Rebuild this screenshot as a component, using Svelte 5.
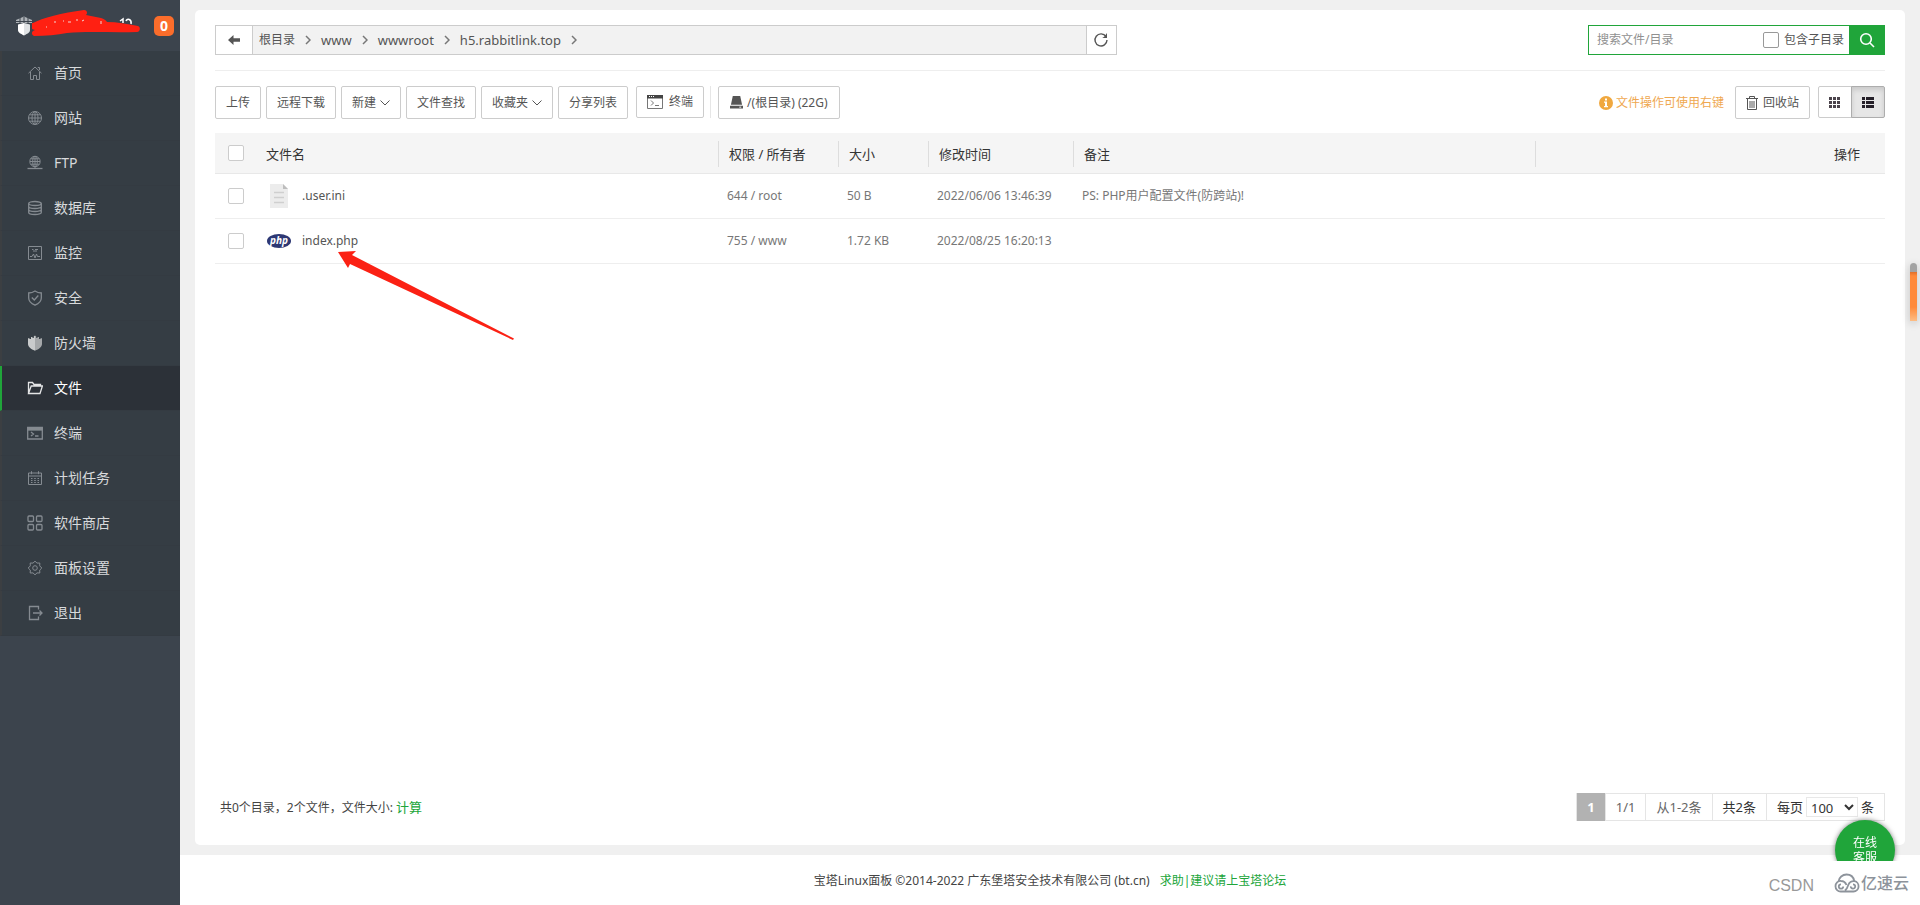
<script lang="ts">
	type NavItem = { label: string; icon: string };
	type FileRow = {
		name: string;
		kind: 'text' | 'php';
		owner: string;
		size: string;
		mtime: string;
		note: string;
	};

	const nav: NavItem[] = [
		{ label: '首页', icon: 'home' },
		{ label: '网站', icon: 'globe' },
		{ label: 'FTP', icon: 'ftp' },
		{ label: '数据库', icon: 'database' },
		{ label: '监控', icon: 'monitor' },
		{ label: '安全', icon: 'shield' },
		{ label: '防火墙', icon: 'firewall' },
		{ label: '文件', icon: 'folder' },
		{ label: '终端', icon: 'terminal' },
		{ label: '计划任务', icon: 'calendar' },
		{ label: '软件商店', icon: 'apps' },
		{ label: '面板设置', icon: 'gear' },
		{ label: '退出', icon: 'logout' }
	];

	const crumbs = ['根目录', 'www', 'wwwroot', 'h5.rabbitlink.top'];

	const files: FileRow[] = [
		{
			name: '.user.ini',
			kind: 'text',
			owner: '644 / root',
			size: '50 B',
			mtime: '2022/06/06 13:46:39',
			note: 'PS: PHP用户配置文件(防跨站)!'
		},
		{
			name: 'index.php',
			kind: 'php',
			owner: '755 / www',
			size: '1.72 KB',
			mtime: '2022/08/25 16:20:13',
			note: ''
		}
	];

	let active = $state('文件');
	let keyword = $state('');
	let recursive = $state(false);
	let view = $state('list');
	let pageSize = $state('100');
	let selected = $state<string[]>([]);

	const allSelected = $derived(selected.length === files.length);

	function toggleAll() {
		selected = allSelected ? [] : files.map((file) => file.name);
	}
</script>

{#snippet navIcon(name: string)}
	<svg class="nav-icon" viewBox="0 0 16 16" width="16" height="16" aria-hidden="true">
		{#if name === 'home'}
			<path d="M1.5 8.2 8 2l6.500 6.200M3.500 7v7.500h3v-4h3v4h3V7M10.800 2.500h1.700v2.500" />
		{:else if name === 'globe'}
			<circle cx="8" cy="8" r="6.500" />
			<ellipse cx="8" cy="8" rx="3" ry="6.500" />
			<path d="M1.500 8h13M2.500 4.800h11M2.500 11.200h11M8 1.500v13" />
		{:else if name === 'ftp'}
			<circle cx="8" cy="6.500" r="5.200" />
			<ellipse cx="8" cy="6.500" rx="2.300" ry="5.200" />
			<path d="M3 6.500h10M3.800 3.800h8.400M3.800 9.200h8.400M8 1.300v12" />
			<path class="thick" d="M.5 13.500h15" />
		{:else if name === 'database'}
			<g class="thick">
				<ellipse cx="8" cy="3.500" rx="6.300" ry="2" />
				<path d="M1.700 3.500v9c0 1.200 2.800 2 6.300 2s6.300-.8 6.300-2v-9M1.700 6.500c0 1.200 2.800 2 6.300 2s6.300-.8 6.300-2M1.700 9.500c0 1.200 2.800 2 6.300 2s6.300-.8 6.300-2" />
			</g>
		{:else if name === 'monitor'}
			<path d="M1.500 1.500h13v13h-13zM3 11.500h2L6.500 9 8 13l1.500-4 1 2.500H13M5 4.500h1.500M8 4.500h3M6 6h4" />
		{:else if name === 'shield'}
			<path class="thick" d="M8 1c2 1.400 4 2 6.300 2v5c0 3.500-2.300 5.500-6.300 7.200C4 13.500 1.700 11.500 1.700 8V3C4 3 6 2.400 8 1z" />
			<path class="thick" d="M4.800 7.500 7.300 10l4-4.500" />
		{:else if name === 'firewall'}
			<path class="fill-light" d="M8 .5 6.800 1.400V3H5.500V2H4v2H2.500V3.200H1V9c0 3 3 5 7 6.800z" />
			<path class="fill-dim" d="m8 .5 1.200.9V3h1.300V2H12v2h1.500v-.8H15V9c0 3-3 5-7 6.800z" />
		{:else if name === 'folder'}
			<path class="thick" d="M1.500 13.500v-11h4l1.500 2h6.500V6M1.500 13.500 4.200 6h11.200l-2.400 7.500z" />
		{:else if name === 'terminal'}
			<path class="thick" d="M.7 2.500h14.600v11.500H.7zM4 7l2.500 2L4 11M8 11h3.500" />
			<path class="fill" d="M.7 2.500h14.600v2.600H.7z" />
		{:else if name === 'calendar'}
			<path d="M1.500 3h13v11.500h-13zM1.500 6h13M4.500 1.200v3M11.500 1.200v3M4 8.500h1.500M7.200 8.500h1.600M10.500 8.500H12M4 10.500h1.500M7.200 10.500h1.600M10.500 10.500H12M4 12.500h1.500M7.200 12.500h1.600M10.500 12.500H12" />
		{:else if name === 'apps'}
			<g class="thick">
				<rect x="1" y="1" width="5.500" height="5.500" rx="1" />
				<rect x="9.500" y="1" width="5.500" height="5.500" rx="1" />
				<rect x="1" y="9.500" width="5.500" height="5.500" rx="1" />
				<rect x="9.500" y="9.500" width="5.500" height="5.500" rx="1" />
			</g>
		{:else if name === 'gear'}
			<path d="m8 1.200 2 1.900 2.800-.1-.1 2.900L14.800 8l-2.100 2.100.1 2.900-2.800-.1-2 1.900-2-1.900-2.800.1.100-2.900L1.200 8l2.100-2.100L3.200 3l2.800.1z" />
			<circle cx="8" cy="8" r="2.300" />
		{:else}
			<path class="thick" d="M11.500 4.500v-3h-9v13h9v-3M6 8h9M12.500 5.500 15 8l-2.500 2.500" />
		{/if}
	</svg>
{/snippet}

<div class="app">
	<aside class="sidebar">
		<header class="brand">
			<svg class="brand-mark" viewBox="0 0 20 20" width="20" height="20" aria-hidden="true">
				<path fill="#aeb3b8" d="M2 4 10 .5 18 4v3H2z" />
				<path stroke="#3c444d" fill="none" d="M1 5.500h18M6 2v5M10 1v6M14 2v5" />
				<path fill="#fff" d="M10 7 4 8.500V14c0 2.500 3 4 6 5.500z" />
				<path fill="#dfe2e4" d="m10 7 6 1.500V14c0 2.500-3 4-6 5.500z" />
			</svg>
			<svg class="scribble" viewBox="0 0 110 28" width="110" height="28" aria-hidden="true">
				<path fill="#ff2012" d="M1 14C10 9 30 4 52 1c3 0 4 3 2 5l15 3c3 1 5 2 6 4 10 0 20 2 31 4 3 1 2 6-1 6-24 1-48-1-70 1-10 2-21 3-33 3-3-1-3-5 1-6-4 0-5-4-3-7z" />
				<path stroke="#f3d8d6" fill="none" d="M22 13h2M31 12h1M36 13h3M44 11h2M50 12l2-1M69 12v3M14 18h1" />
				<path stroke="#fff" stroke-width="1.500" fill="none" d="M88 12l3-2v4M94 12c1-3 6-2 5 3" />
			</svg>
			<span class="badge">0</span>
		</header>
		<nav>
			{#each nav as item (item.label)}
				<a
					href="#{item.icon}"
					class="nav-link"
					class:is-active={active === item.label}
					onclick={() => (active = item.label)}
				>
					{@render navIcon(item.icon)}
					{item.label}
				</a>
			{/each}
		</nav>
	</aside>

	<div class="main">
		<main class="card">
			<div class="path-row">
				<div class="path">
					<button type="button" class="path-back" aria-label="返回上级">
						<svg viewBox="0 0 14 12" width="14" height="12" aria-hidden="true">
							<path fill="#555" d="M1 6 6.500 1v3.300H13v3.400H6.500V11z" />
						</svg>
					</button>
					<div class="crumbs">
						{#each crumbs as crumb (crumb)}
							<a href="#path">{crumb}</a>
							<svg class="crumb-sep" viewBox="0 0 6 10" width="6" height="10" aria-hidden="true">
								<path d="m1 1 4 4-4 4" />
							</svg>
						{/each}
					</div>
					<button type="button" class="path-refresh" aria-label="刷新">
						<svg viewBox="0 0 16 16" width="16" height="16" aria-hidden="true">
							<path fill="none" stroke="#555" stroke-width="1.400" d="M13 4.600A6 6 0 1 0 14 8" />
							<path fill="#555" d="M14 1v5H9.200l2-1.300z" />
						</svg>
					</button>
				</div>

				<div class="search">
					<input
						class="search-input"
						type="text"
						placeholder="搜索文件/目录"
						aria-label="搜索文件/目录"
						bind:value={keyword}
					/>
					<label class="search-option">
						<input type="checkbox" class="check" bind:checked={recursive} />
						包含子目录
					</label>
					<button type="button" class="search-button" aria-label="搜索">
						<svg viewBox="0 0 16 16" width="16" height="16" aria-hidden="true">
							<circle cx="7" cy="7" r="5.300" />
							<path d="m11 11 4 4" />
						</svg>
					</button>
				</div>
			</div>

			<div class="toolbar">
				<div class="tools">
					<button type="button" class="btn">上传</button>
					<button type="button" class="btn">远程下载</button>
					<button type="button" class="btn">
						新建
						<svg class="caret" viewBox="0 0 10 6" width="10" height="6" aria-hidden="true"><path d="m.5.5 4.500 4.500L9.500.5" /></svg>
					</button>
					<button type="button" class="btn">文件查找</button>
					<button type="button" class="btn">
						收藏夹
						<svg class="caret" viewBox="0 0 10 6" width="10" height="6" aria-hidden="true"><path d="m.5.5 4.500 4.500L9.500.5" /></svg>
					</button>
					<button type="button" class="btn">分享列表</button>
				</div>
				<div class="terminal">
					<button type="button" class="btn btn-icon">
						<svg viewBox="0 0 16 14" width="16" height="14" aria-hidden="true">
							<path fill="none" stroke="#777" d="M.5.500h15v13H.5zM4 5.500 6.500 8 4 10.500M8 10.500h4" />
							<path fill="#444" d="M0 0h16v3.500H0z" />
							<path fill="#fff" d="M2 1h1v1H2zM4 1h1v1H4zM6 1h1v1H6z" />
						</svg>
						终端
					</button>
				</div>
				<button type="button" class="btn btn-disk">
					<svg viewBox="0 0 14 14" width="13" height="13" aria-hidden="true">
						<path fill="#555" d="M3 0h8l2 9.500H1zM0 10.500h14V13.500H0z" />
						<path fill="#fff" d="M10 11.500h2v1h-2z" />
					</svg>
					/(根目录) (22G)
				</button>

				<p class="tip">
					<svg viewBox="0 0 14 14" width="14" height="14" aria-hidden="true">
						<circle cx="7" cy="7" r="7" fill="#f0a83f" />
						<path fill="#fff" d="M6 2.500h2v2H6zM5 5.500h3v4.500h1v1.200H5V10h1V6.700H5z" />
					</svg>
					文件操作可使用右键
				</p>
				<button type="button" class="btn btn-trash">
					<svg viewBox="0 0 12 14" width="12" height="14" aria-hidden="true">
						<path fill="none" stroke="#555" d="M0 2.500h12M3.500 2.500v-2h5v2M1.500 3v10.500h9V3M4 5v7M6 5v7M8 5v7" />
					</svg>
					回收站
				</button>
				<div class="views">
					<button type="button" class="view" class:is-on={view === 'grid'} aria-label="图标视图" onclick={() => (view = 'grid')}>
						<svg viewBox="0 0 12 11" width="12" height="11" aria-hidden="true">
							<path fill="#4b444c" d="M0 0h3v3H0zM4 0h3v3H4zM8 0h3v3H8zM0 4h3v3H0zM4 4h3v3H4zM8 4h3v3H8zM0 8h3v3H0zM4 8h3v3H4zM8 8h3v3H8z" />
						</svg>
					</button>
					<button type="button" class="view" class:is-on={view === 'list'} aria-label="列表视图" onclick={() => (view = 'list')}>
						<svg viewBox="0 0 12 11" width="12" height="11" aria-hidden="true">
							<path fill="#252029" d="M0 0h3v3H0zM4 0h8v3H4zM0 4h3v3H0zM4 4h8v3H4zM0 8h3v3H0zM4 8h8v3H4z" />
						</svg>
					</button>
				</div>
			</div>

			<table class="files">
				<colgroup>
					<col class="col-check" />
					<col class="col-name" />
					<col class="col-owner" />
					<col class="col-size" />
					<col class="col-time" />
					<col class="col-note" />
					<col />
				</colgroup>
				<thead>
					<tr>
						<th><input type="checkbox" class="check" aria-label="全选" checked={allSelected} onchange={toggleAll} /></th>
						<th><span class="head">文件名</span></th>
						<th><span class="head">权限 / 所有者</span></th>
						<th><span class="head">大小</span></th>
						<th><span class="head">修改时间</span></th>
						<th><span class="head">备注</span></th>
						<th><span class="head head-last">操作</span></th>
					</tr>
				</thead>
				<tbody>
					{#each files as file (file.name)}
						<tr>
							<td><input type="checkbox" class="check" aria-label={file.name} value={file.name} bind:group={selected} /></td>
							<td>
								<a href="#file" class="file-name">
									{#if file.kind === 'php'}
										<svg viewBox="0 0 24 24" width="24" height="24" aria-hidden="true">
											<ellipse cx="12" cy="12" rx="12" ry="7" fill="#2d3874" />
											<text x="12" y="15" class="php-text">php</text>
										</svg>
									{:else}
										<svg viewBox="0 0 24 24" width="24" height="24" aria-hidden="true">
											<path fill="#ececec" d="M3 0h13l5 5v19H3z" />
											<path fill="#bdbdbd" d="M16 0v5h5z" />
											<path stroke="#cfcfcf" stroke-width="1.500" d="M7 8.500h10M7 13.500h10M7 18.500h10" />
										</svg>
									{/if}
									{file.name}
								</a>
							</td>
							<td>{file.owner}</td>
							<td>{file.size}</td>
							<td>{file.mtime}</td>
							<td>{file.note}</td>
							<td></td>
						</tr>
					{/each}
				</tbody>
			</table>

			<div class="summary">
				<p class="totals">共0个目录，2个文件，文件大小: <a href="#size">计算</a></p>
				<div class="pager">
					<span class="page-current">1</span>
					<span class="page-soft">1/1</span>
					<span class="page-soft">从1-2条</span>
					<span>共2条</span>
					<label>
						每页
						<select bind:value={pageSize}>
							<option>100</option>
							<option>200</option>
							<option>500</option>
						</select>
						条
					</label>
				</div>
			</div>
		</main>

		<footer class="footer">
			宝塔Linux面板 ©2014-2022 广东堡塔安全技术有限公司 (bt.cn)
			<a href="#forum">求助|建议请上宝塔论坛</a>
		</footer>
	</div>

	<svg class="arrow" viewBox="0 0 178 92" width="178" height="92" aria-hidden="true">
		<path fill="#fb2114" d="m0 2 18-1-4 4 162 83.500-1 1.500L12 14l-2 4z" />
	</svg>

	<div class="side-handle" aria-hidden="true"></div>
	<button type="button" class="support">在线<br />客服</button>
	<div class="watermark">
		<span class="wm-csdn">CSDN</span>
		<svg viewBox="0 0 26 20" width="26" height="20" aria-hidden="true">
			<path d="M4.500 8.500C5 4.500 8.500 1.500 12.500 1.500c4 0 7 2.500 7.700 6.500" />
			<path d="M9.200 13.500a2.200 2.200 0 1 1-2.200-2.200M12.500 12c-1-2.500-3-4-5.500-4a5 5 0 0 0-5.500 5.200A5.200 5.200 0 0 0 7 18.500h12.500a5.200 5.200 0 1 0-5-7c-.8 2.500-1.500 4.500-3.500 6M16.800 13.300a2.200 2.200 0 1 0 2.200-2" />
		</svg>
		<span class="wm-yisu">亿速云</span>
	</div>
</div>

<style>
	:global(body) {
		background: #f0f0f0;
	}

	.app {
		position: relative;
		display: flex;
		min-height: 100vh;
		font-family: 'Noto Sans', 'Noto Sans CJK SC', sans-serif;
		font-size: 12px;
		line-height: 18px;
		color: #555;
	}

	.app *,
	.app *::before {
		box-sizing: border-box;
	}

	a {
		color: inherit;
		text-decoration: none;
	}

	button,
	input,
	select {
		font: inherit;
		color: inherit;
		margin: 0;
	}

	button {
		display: inline-flex;
		align-items: center;
		justify-content: center;
		padding: 0;
		border: 0;
		cursor: pointer;
	}

	svg {
		display: block;
		flex-shrink: 0;
	}

	/* Sidebar */
	.sidebar {
		flex: 0 0 180px;
		background: #3c444d;
	}

	.brand {
		display: flex;
		align-items: center;
		height: 51px;
		padding: 0 6px 0 14px;
	}

	.scribble {
		margin: -6px 0 0 -2px;
	}

	.badge {
		width: 20px;
		margin-left: auto;
		border-radius: 5px;
		background: #fb6d2b;
		color: #fff;
		font-size: 14px;
		font-weight: 700;
		line-height: 20px;
		text-align: center;
	}

	.nav-link {
		display: flex;
		align-items: center;
		gap: 11px;
		height: 45px;
		padding-left: 25px;
		border-left: 2px solid #3c3f42;
		border-bottom: 1px solid #343b42;
		background: #353d44;
		color: #d8dadc;
		font-size: 14px;
	}

	.nav-link.is-active {
		border-left-color: #20a53a;
		background: #2c3138;
		color: #fff;
	}

	.nav-icon {
		fill: none;
		stroke: #858b91;
		stroke-width: 1;
	}

	.is-active .nav-icon {
		stroke: #e4e5e6;
	}

	.nav-icon .thick {
		stroke-width: 1.3;
	}

	.nav-icon .fill {
		fill: #858b91;
	}

	.nav-icon .fill-light {
		fill: #c9cbcc;
		stroke: none;
	}

	.nav-icon .fill-dim {
		fill: #a5a8aa;
		stroke: none;
	}

	/* Content */
	.main {
		display: flex;
		flex: 1;
		flex-direction: column;
		min-width: 0;
	}

	.card {
		display: flex;
		flex: 1;
		flex-direction: column;
		margin: 10px 15px;
		padding: 15px 20px 24px;
		border-radius: 5px;
		background: #fff;
	}

	.path-row {
		display: flex;
		justify-content: space-between;
		padding-bottom: 15px;
		border-bottom: 1px solid #eee;
	}

	.path {
		display: flex;
		width: 54%;
		height: 30px;
		border: 1px solid #ccc;
	}

	.path-back {
		width: 37px;
		border-right: 1px solid #ccc;
		background: #fff;
	}

	.path-refresh {
		width: 30px;
		border-left: 1px solid #ccc;
		background: #fff;
	}

	.crumbs {
		display: flex;
		flex: 1;
		align-items: center;
		gap: 10px;
		padding-left: 6px;
		background: #f2f2f2;
		font-size: 13px;
	}

	.crumb-sep {
		fill: none;
		stroke: #777;
		stroke-width: 1.5;
	}

	.crumbs a:first-child {
		font-size: 12px;
	}

	.search {
		display: flex;
		width: 297px;
		height: 30px;
		border: 1px solid #20a53a;
	}

	.search-input {
		flex: 1;
		min-width: 0;
		padding: 0 8px;
		border: 0;
		outline: none;
		background: #fff;
	}

	.search-input::placeholder {
		color: #909090;
	}

	.search-option {
		display: flex;
		align-items: center;
		gap: 5px;
		padding-right: 5px;
	}

	.search-button {
		width: 35px;
		background: #20a53a;
	}

	.search-button svg {
		fill: none;
		stroke: #fff;
		stroke-width: 1.6;
	}

	.check {
		display: block;
		width: 16px;
		height: 16px;
		border: 1px solid #ccc;
		border-radius: 2px;
		background: #fff;
		appearance: none;
	}

	.check:checked {
		border-color: #20a53a;
		background: #20a53a;
	}

	.search-option .check {
		border-color: #999;
	}

	/* Toolbar */
	.toolbar {
		display: flex;
		align-items: flex-start;
		padding: 15px 0 14px;
	}

	.tools {
		display: flex;
		gap: 5px;
	}

	.btn {
		gap: 4px;
		height: 33px;
		padding: 0 10px;
		border: 1px solid #ccc;
		border-radius: 2px;
		background: #fff;
		white-space: nowrap;
	}

	.caret {
		fill: none;
		stroke: #555;
	}

	.terminal {
		margin-left: 8px;
		padding-right: 6px;
		border-right: 1px solid #e6e6e6;
	}

	.btn-icon {
		gap: 6px;
		height: 32px;
	}

	.btn-disk {
		margin-left: 7px;
		padding: 0 11px;
	}

	.tip {
		display: flex;
		align-items: center;
		gap: 3px;
		height: 33px;
		margin: 0 11px 0 auto;
		color: #efa850;
	}

	.btn-trash {
		gap: 5px;
	}

	.views {
		display: flex;
		height: 32px;
		margin-left: 8px;
	}

	.view {
		width: 34px;
		border: 1px solid #ccc;
		border-radius: 2px 0 0 2px;
		background: #fff;
	}

	.view + .view {
		margin-left: -1px;
		border-radius: 0 2px 2px 0;
	}

	.view.is-on {
		border-color: #adadad;
		background: #e6e6e6;
		box-shadow: inset 0 3px 5px rgba(0, 0, 0, 0.125);
	}

	/* File table */
	.files {
		width: 100%;
		border-collapse: separate;
		border-spacing: 0;
		table-layout: fixed;
	}

	.col-check {
		width: 41px;
	}

	.col-name {
		width: 463px;
	}

	.col-owner {
		width: 120px;
	}

	.col-size {
		width: 90px;
	}

	.col-time {
		width: 145px;
	}

	.col-note {
		width: 462px;
	}

	th {
		height: 41px;
		padding: 2px 0 0;
		border-bottom: 1px solid #e8e8e8;
		background: #f5f5f5;
		color: #333;
		font-size: 13px;
		font-weight: 400;
		text-align: left;
	}

	.head {
		display: block;
		padding-left: 10px;
		border-right: 1px solid #ddd;
		line-height: 26px;
	}

	.head-last {
		padding-right: 25px;
		border-right: 0;
		text-align: right;
	}

	td {
		height: 45px;
		padding: 0 8px;
		border-bottom: 1px solid #eee;
		color: #777;
	}

	th:first-child,
	td:first-child {
		padding: 0 0 0 13px;
	}

	.file-name {
		display: flex;
		align-items: center;
		gap: 11px;
		padding-left: 3px;
		color: #555;
	}

	.php-text {
		fill: #fff;
		font-size: 10px;
		font-style: italic;
		font-weight: 700;
		text-anchor: middle;
	}

	/* Totals and paging */
	.summary {
		display: flex;
		align-items: center;
		justify-content: space-between;
		margin-top: auto;
	}

	.totals {
		margin: 0;
		padding-left: 5px;
		color: #444;
	}

	.totals a {
		color: #20a53a;
		font-size: 13px;
	}

	.pager {
		display: flex;
		height: 28px;
		border: 1px solid #e5e5e5;
		font-size: 13px;
		line-height: 26px;
		color: #333;
	}

	.pager > * {
		padding: 0 10px;
		border-left: 1px solid #e5e5e5;
	}

	.pager .page-current {
		margin: -1px 0;
		border: 0;
		background: #b2b2b2;
		color: #fff;
		font-weight: 700;
		line-height: 28px;
	}

	.pager .page-soft {
		color: #666;
	}

	.pager label {
		display: flex;
		align-items: center;
		gap: 3px;
	}

	.pager select {
		width: 52px;
		height: 20px;
		padding: 0;
		border: 1px solid #e8e8e8;
		background: #fff;
		line-height: 18px;
	}

	.footer {
		display: flex;
		align-items: center;
		justify-content: center;
		gap: 10px;
		height: 50px;
		padding-top: 2px;
		background: #fff;
		color: #444;
	}

	.footer a {
		color: #20a53a;
	}

	/* Overlays */
	.arrow {
		position: absolute;
		top: 250px;
		left: 338px;
		pointer-events: none;
	}

	.side-handle {
		position: fixed;
		top: 263px;
		right: 3px;
		width: 7px;
		height: 58px;
		border-radius: 4px 4px 0 0;
		background: linear-gradient(#a3a3a3 9px, #e0702a 9px, #ff8a3a 13px, #ff8a3a 44px, #fdbd85);
		box-shadow: 0 2px 8px rgba(0, 0, 0, 0.2);
	}

	.support {
		position: fixed;
		right: 25px;
		bottom: 25px;
		width: 60px;
		height: 60px;
		border-radius: 50%;
		background: #20a53a;
		box-shadow: 0 0 5px rgba(0, 0, 0, 0.5);
		color: #fff;
		line-height: 15px;
	}

	.watermark {
		position: fixed;
		right: 0;
		bottom: 0;
		display: flex;
		align-items: center;
		height: 44px;
		padding: 0 11px 0 8px;
		background: #fff;
		color: #8d939b;
	}

	.watermark svg {
		fill: none;
		stroke: #8d939b;
		stroke-width: 1.8;
	}

	.wm-csdn {
		margin: 6px 20px 0 0;
		color: #999;
		font-family: 'Liberation Sans', sans-serif;
		font-size: 16px;
	}

	.wm-yisu {
		margin-left: 1px;
		font-size: 16px;
		font-weight: 500;
	}
</style>
